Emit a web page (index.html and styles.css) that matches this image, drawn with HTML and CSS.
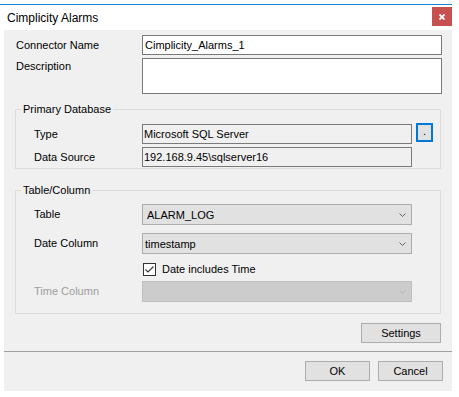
FILE: index.html
```html
<!DOCTYPE html>
<html lang="en">
<head>
    <meta charset="UTF-8">
    <meta name="viewport" content="width=device-width, initial-scale=1.0">
    <title>Cimplicity Alarms</title>
    <link rel="stylesheet" href="styles.css">
</head>
<body>

    <div class="window">
        <!-- Barre de titre -->
        <div class="titlebar">
            <span class="title">Cimplicity Alarms</span>
            <button class="close" type="button">
                <svg width="6" height="6" viewBox="0 0 6 6"><path d="M0.5 0.5 L5.5 5.5 M5.5 0.5 L0.5 5.5" stroke="#fff" stroke-width="1.8"/></svg>
            </button>
        </div>

        <div class="client">
            <div class="row">
                <label class="lbl" for="connName">Connector Name</label>
                <input class="text" type="text" id="connName" value="Cimplicity_Alarms_1">
            </div>
            <div class="row row-top">
                <label class="lbl desc" for="desc">Description</label>
                <textarea class="text memo" id="desc"></textarea>
            </div>

            <!-- Base de donnees -->
            <fieldset class="group db">
                <legend>Primary Database</legend>
                <div class="grow">
                    <label class="glbl">Type</label>
                    <input class="text ro" type="text" readonly value="Microsoft SQL Server">
                    <button class="browse" type="button">.</button>
                </div>
                <div class="grow gap3">
                    <label class="glbl">Data Source</label>
                    <input class="text ro" type="text" readonly value="192.168.9.45\sqlserver16">
                </div>
            </fieldset>

            <!-- Table / colonnes -->
            <fieldset class="group tc">
                <legend>Table/Column</legend>
                <div class="grow">
                    <label class="glbl">Table</label>
                    <div class="combo list"><span>ALARM_LOG</span>
                        <svg width="7" height="4" viewBox="0 0 7 4"><polyline points="0.5,0.5 3.5,3.5 6.5,0.5" fill="none" stroke="#606060"/></svg>
                    </div>
                </div>
                <div class="grow gap8">
                    <label class="glbl">Date Column</label>
                    <div class="combo"><span>timestamp</span>
                        <svg width="7" height="4" viewBox="0 0 7 4"><polyline points="0.5,0.5 3.5,3.5 6.5,0.5" fill="none" stroke="#606060"/></svg>
                    </div>
                </div>
                <div class="check-row">
                    <svg class="check" width="13" height="13" viewBox="0 0 13 13">
                        <rect x="0.5" y="0.5" width="12" height="12" fill="#fff" stroke="#333"/>
                        <polyline points="2.5,6.5 5,9 10.5,3.5" fill="none" stroke="#333" stroke-width="1.1"/>
                    </svg>
                    <span>Date includes Time</span>
                </div>
                <div class="grow gap5">
                    <label class="glbl disabled">Time Column</label>
                    <div class="combo off"><span></span>
                        <svg width="7" height="4" viewBox="0 0 7 4"><polyline points="0.5,0.5 3.5,3.5 6.5,0.5" fill="none" stroke="#b5b5b5"/></svg>
                    </div>
                </div>
            </fieldset>

            <div class="settings-bar">
                <button class="btn settings" type="button">Settings</button>
            </div>

            <div class="sep"></div>

            <div class="footer">
                <button class="btn" type="button">OK</button>
                <button class="btn" type="button">Cancel</button>
            </div>
        </div>
    </div>

</body>
</html>
```

FILE: styles.css
```css
body {
    margin: 0;
    background-color: #fff;
    font-family: "Liberation Sans", Arial, sans-serif;
    font-size: 11px;
    color: #000;
}
.window {
    margin-top: 4px;
    width: 452px;
    border-top: 1px solid #1883d7;
}
.titlebar {
    height: 25px;
    display: flex;
    justify-content: space-between;
    align-items: center;
    padding-left: 7px;
}
.title {
    font-size: 12px;
}
.close {
    align-self: flex-start;
    margin-top: 2px;
    width: 20px;
    height: 19px;
    padding: 0;
    border: none;
    background-color: #c75050;
    display: flex;
    align-items: center;
    justify-content: center;
}
.client {
    margin-left: 4px;
    width: 448px;
    height: 361px;
    box-sizing: border-box;
    padding-top: 5px;
    background-color: #f0f0f0;
}
.row {
    display: flex;
    align-items: center;
    padding-left: 12px;
}
.row-top {
    align-items: flex-start;
    margin-top: 3px;
}
.lbl {
    width: 126px;
    line-height: 13px;
}
.desc {
    margin-top: 2px;
}
.text {
    width: 300px;
    height: 20px;
    box-sizing: border-box;
    border: 1px solid #7a7a7a;
    background-color: #fff;
    padding: 0 2px;
    margin: 0;
    font-family: inherit;
    font-size: 11px;
    color: #000;
    outline: none;
}
.memo {
    height: 36px;
    resize: none;
    display: block;
}
.group {
    margin: 0 11px;
    padding: 0 0 1px 0;
    border: 1px solid #dcdcdc;
    min-width: 0;
}
.group legend {
    margin-left: 5px;
    padding: 0 2px;
    line-height: 13px;
}
.db {
    margin-top: 9px;
    padding-top: 8px;
}
.tc {
    margin-top: 15px;
    padding-top: 7px;
    padding-bottom: 11px;
}
.grow {
    display: flex;
    align-items: center;
    padding-left: 18px;
}
.gap3 { margin-top: 3px; }
.gap5 { margin-top: 5px; }
.gap8 { margin-top: 8px; }
.glbl {
    width: 108px;
    line-height: 13px;
}
.disabled {
    color: #9d9d9d;
}
.ro {
    width: 270px;
    padding: 0 1px;
    background-color: #f0f0f0;
}
.browse {
    align-self: flex-start;
    margin: -1px 0 0 4px;
    width: 17px;
    height: 19px;
    padding: 0 0 3px 0;
    border: 2px solid #0078d7;
    background-color: #e1e1e1;
    font-family: inherit;
    font-size: 11px;
    line-height: 11px;
    display: flex;
    align-items: flex-end;
    justify-content: center;
}
.combo {
    width: 270px;
    height: 21px;
    box-sizing: border-box;
    border: 1px solid #adadad;
    background-color: #e1e1e1;
    display: flex;
    align-items: center;
    justify-content: space-between;
    padding: 0 5px 0 2px;
}
.combo.list {
    padding-left: 4px;
}
.combo.off {
    background-color: #cccccc;
    border-color: #bfbfbf;
}
.check-row {
    display: flex;
    align-items: center;
    margin-top: 9px;
    padding-left: 127px;
    line-height: 13px;
}
.check {
    margin-right: 6px;
}
.settings-bar {
    display: flex;
    justify-content: flex-end;
    padding-right: 11px;
    margin-top: 9px;
}
.btn {
    width: 65px;
    height: 20px;
    padding: 0;
    border: 1px solid #adadad;
    background-color: #e1e1e1;
    font-family: inherit;
    font-size: 11px;
    color: #000;
}
.settings {
    width: 80px;
}
.sep {
    margin-top: 8px;
    height: 1px;
    background-color: #a0a0a0;
}
.footer {
    display: flex;
    justify-content: flex-end;
    gap: 8px;
    padding-right: 9px;
    margin-top: 9px;
}
```
